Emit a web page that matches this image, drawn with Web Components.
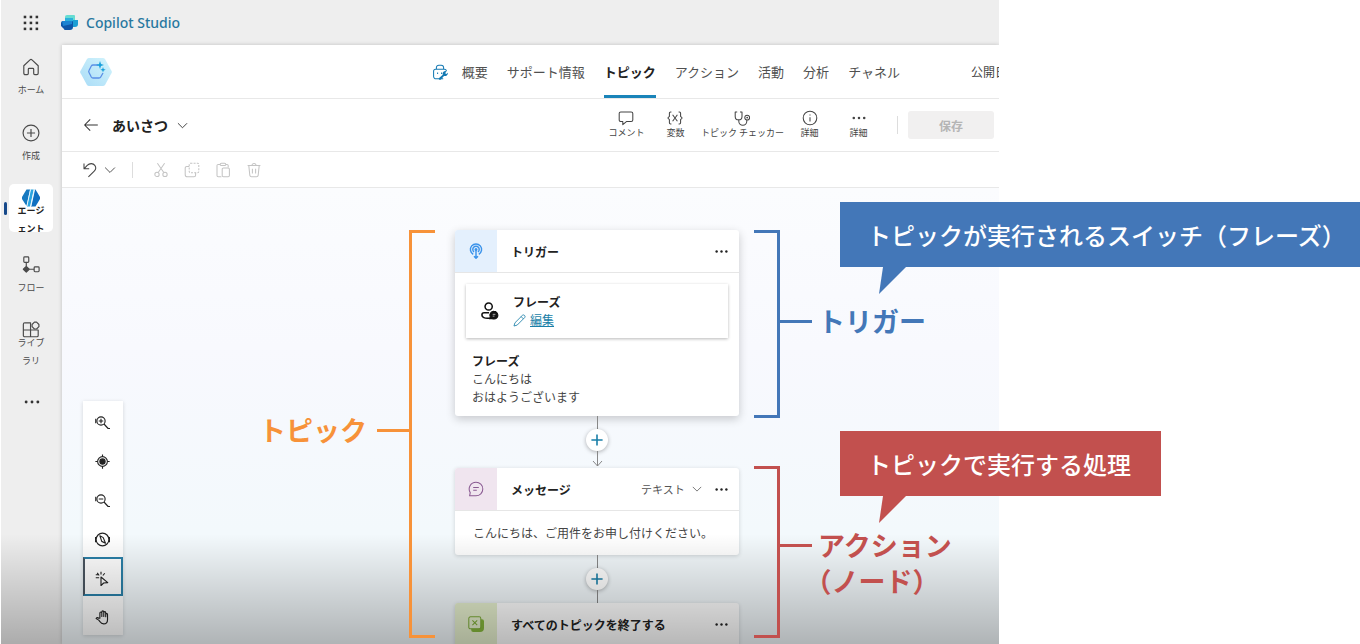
<!DOCTYPE html>
<html lang="ja">
<head>
<meta charset="utf-8">
<meta name="viewport" content="width=device-width, initial-scale=1">
<title>Copilot Studio</title>
<style>
    body {
        margin: 0;
        background: #fff;
        color: #444;
        font-family: "Noto Sans CJK JP", "Noto Sans", sans-serif;
        font-size: 12px;
    }
</style>
</head>
<body>
<topic-guide></topic-guide>

<script>
// stroke icons on a 20px grid
const ICONS = {
    waffle: '<g fill="currentColor" stroke="none"><rect x="2" y="2" width="3" height="3"/><rect x="9" y="2" width="3" height="3"/><rect x="16" y="2" width="3" height="3"/><rect x="2" y="9" width="3" height="3"/><rect x="9" y="9" width="3" height="3"/><rect x="16" y="9" width="3" height="3"/><rect x="2" y="16" width="3" height="3"/><rect x="9" y="16" width="3" height="3"/><rect x="16" y="16" width="3" height="3"/></g>',
    home: '<path d="M2 8.600 8.900 2a1.600 1.600 0 0 1 2.200 0L18 8.600V17a1.500 1.500 0 0 1-1.500 1.500h-2.300a1.200 1.200 0 0 1-1.200-1.200V12.500a1 1 0 0 0-1-1H8a1 1 0 0 0-1 1v4.800a1.200 1.200 0 0 1-1.200 1.200H3.500A1.500 1.500 0 0 1 2 17z"/>',
    create: '<circle cx="10" cy="10" r="8.800"/><path d="M10 5.500v9M5.500 10h9"/>',
    agent: '<g stroke="none"><path fill="#1679c0" d="M5 .500h4L5 19 0 11V9z"/><path fill="#2aa5e0" d="M9.500.500H13L9 19.500H5.500z"/><path fill="#0f6fc0" d="M14 .500h1L20 9v2l-5 8.500H10z"/><path fill="#eaf6fd" d="M9 .500h1L6 19H5zM13.300.500h1.200L10.500 19h-1.200z"/></g>',
    flow: '<rect x="2" y="1" width="5.500" height="6" rx="1"/><rect x="13.500" y="12" width="5.500" height="5.500" rx="1"/><path d="M4.750 7v4M8 14.750h5.500"/><path fill="currentColor" d="m4.750 11.500 3.250 3.250L4.750 18 1.500 14.750z"/>',
    library: '<path d="M1.500 3.500a1.500 1.500 0 0 1 1.500-1.500H9.500V17.500H3A1.500 1.500 0 0 1 1.500 16zM1.500 10H18v6a1.500 1.500 0 0 1-1.500 1.500H9.500"/><path d="M13.800 1.300h2.400l2.600 2.600v2.400l-2.600 2.600h-2.400l-2.600-2.600V3.900z"/>',
    dots: '<g fill="currentColor" stroke="none"><circle cx="3.500" cy="10" r="1.600"/><circle cx="10" cy="10" r="1.600"/><circle cx="16.500" cy="10" r="1.600"/></g>',
    bag: '<path d="M14 18.500H5a3 3 0 0 1-3-3V9a2.500 2.500 0 0 1 2.500-2.500h11A2.500 2.500 0 0 1 18 9M5.500 6.500V4.500a3 3 0 0 1 3-3h3a3 3 0 0 1 3 3v2M7 10.500v2M12 10.500v2"/><path stroke="none" fill="#1479b3" d="M20 11a4 4 0 0 1-5 4l-4 4.500a1.500 1.500 0 0 1-2.200-2L13.500 13.500A3.500 3.500 0 0 1 18 9l-1.500 2.500 1.500 1z"/>',
    back: '<path d="M18.500 10H2M9 3l-7 7 7 7"/>',
    chevron: '<path d="m3 6.500 7 7 7-7"/>',
    comment: '<path d="M3.500 2.500h13A2 2 0 0 1 18.500 4.500v8a2 2 0 0 1-2 2H10.500L6 18.300V14.500H3.500a2 2 0 0 1-2-2v-8a2 2 0 0 1 2-2z"/>',
    variable: '<path d="M5.500 2.500H4.500a1.500 1.500 0 0 0-1.500 1.500v4L1 10l2 2v4a1.500 1.500 0 0 0 1.500 1.500h1M14.500 2.500h1A1.500 1.500 0 0 1 17 4v4l2 2-2 2v4a1.500 1.500 0 0 1-1.500 1.500h-1M7 6l6 8M13 6l-6 8"/>',
    checker: '<path d="M4 2.500H1.500V8a4 4 0 0 0 8.500 0V2.500H7.500M6 12v2a5 5 0 0 0 10 0v-1.500"/><circle cx="16.500" cy="9.500" r="3"/><circle cx="16.500" cy="9.500" r=".500"/>',
    info: '<circle cx="10" cy="10" r="8.500"/><path d="M10 9v5.500M10 5.500v1.500"/>',
    undo: '<path d="M2.500 2v6.500H9M2.500 8.500 6.500 4.300C9.500 1.200 14 1.400 16 4.200c1.800 2.500 1.200 5.300-.700 7.200L8 18.500"/>',
    cut: '<circle cx="5" cy="15.500" r="2.700"/><circle cx="15" cy="15.500" r="2.700"/><path d="M6.500 13.200 14.500 1.500M13.500 13.200 5.500 1.500"/>',
    copy: '<path stroke-dasharray="2.500 1.500" d="M8 1.500h9a1.500 1.500 0 0 1 1.500 1.500v9a1.500 1.500 0 0 1-1.500 1.500H8A1.500 1.500 0 0 1 6.500 12V3A1.500 1.500 0 0 1 8 1.500z"/><path d="M6.500 5.500h-3A2 2 0 0 0 1.500 7.500v8a3 3 0 0 0 3 3h8a2 2 0 0 0 2-2v-3"/>',
    paste: '<path d="M6.500 3H4a1.500 1.500 0 0 0-1.500 1.500V17A1.500 1.500 0 0 0 4 18.500h4M13.500 3H15a1.500 1.500 0 0 1 1.500 1.500V7"/><rect x="6.500" y="1.500" width="7" height="3" rx="1.500"/><rect x="9" y="7.500" width="9" height="11" rx="1.500"/>',
    trash: '<path d="M2 4.500h16M7.500 4.500a2.500 2.500 0 0 1 5 0M3.500 4.500l1.300 12.300a2 2 0 0 0 2 1.700h6.400a2 2 0 0 0 2-1.700L16.500 4.500M8 8.500v6M12 8.500v6"/>',
    zoomIn: '<circle cx="8" cy="8" r="5.500"/><path d="m12 12 5.500 6H20M8 5v6M5 8h6M1 5v6"/>',
    zoomOut: '<circle cx="8" cy="8" r="5.500"/><path d="m12 12 5.500 6H20M5 8h6M1 5v6"/>',
    target: '<circle cx="10" cy="10" r="6.500"/><circle cx="10" cy="10" r="3.500" fill="currentColor"/><path d="M10 .500v3M10 16.500v3M.500 10h3M16.500 10h3"/>',
    compass: '<circle cx="10" cy="10" r="8.500"/><path d="m6.500 5 4.500 2.500 3 7.500-5-2.500zM.700 6.500v7M19.300 6.500v7"/>',
    pointer: '<path d="M8 8v11.500l3.500-3.500 5.500-.500zM5.500 6 3 2.500M8 4.500V1M10.500 6 13 3M5.500 9H1M1 5h3"/>',
    hand: '<path d="M6.500 11V4a1.300 1.300 0 0 1 2.600 0v4.500V2.500a1.300 1.300 0 0 1 2.600 0v6V3.500a1.300 1.300 0 0 1 2.600 0V9V6a1.200 1.200 0 0 1 2.400 0v6.500c0 3.500-2 6-5.200 6-2.500 0-3.700-1-4.700-2.800L5 13.500l-3.500-2c.500-1.700 2.200-1.700 3.500-.500z"/>',
    trigger: '<g stroke-width="1.800"><path d="M6.500 14.200a7 7 0 1 1 7 0M7.500 11.200a4 4 0 1 1 5 0"/><circle cx="10" cy="8" r="1"/><path d="M10 9v10M7.500 16.500 10 19l2.500-2.500"/></g>',
    message: '<path d="M10 1.500a8.500 8.500 0 1 1 0 17H2l.800-4A8.500 8.500 0 0 1 10 1.500zM6.500 8h7M6.500 11.500H11"/>',
    end: '<path stroke="none" fill="#86b83c" d="M16 4h1.500A2.500 2.500 0 0 1 20 6.500V15a5 5 0 0 1-5 5H6.500A2.500 2.500 0 0 1 4 17.500V16h9a3 3 0 0 0 3-3z"/><rect x="1" y="1" width="15" height="15" rx="2"/><path d="m5.500 5.500 6 6M11.500 5.500l-6 6"/>',
    person: '<g stroke-width="1.700"><circle cx="8.500" cy="5" r="4"/><path d="M9 18c-5 .500-8-1-8-3.500C1 13 2 12 3.500 12H9"/></g><path fill="currentColor" d="M14.500 10.500a4.200 4.200 0 1 1 0 8.400 5 5 0 0 1-2-.400H9.300l1-2a4.200 4.200 0 0 1 4.200-6z"/><path stroke="#fff" stroke-width=".700" d="M13 13.700h3M13 15.700h2"/>',
    pencil: '<path d="M14.500 2a2.500 2.500 0 0 1 3.500 3.500L6.500 17l-5 1.500L3 13.500zM12.500 4l3.500 3.500"/>',
    plus: '<path d="M10 3v14M3 10h14"/>'
};

class UiIcon extends HTMLElement {
    connectedCallback() {
        this.attachShadow({ mode: 'open' });
        this.shadowRoot.innerHTML = `
            <style>
                :host {
                    display: block;
                    flex: none;
                    width: var(--size, 16px);
                    height: var(--size, 16px);
                }
                svg {
                    display: block;
                    width: 100%;
                    height: 100%;
                    fill: none;
                    stroke: currentColor;
                    stroke-width: var(--stroke, 1.3);
                    stroke-linejoin: round;
                }
            </style>
            <svg viewBox="0 0 20 20" aria-hidden="true">${ICONS[this.getAttribute('name')]}</svg>
        `;
    }
}

class TopBar extends HTMLElement {
    constructor() {
        super();
        this.attachShadow({ mode: 'open' });
        this.shadowRoot.innerHTML = `
            <style>
                :host {
                    display: flex;
                    align-items: center;
                    height: 45px;
                    padding: 0 21px;
                    gap: 22px;
                    background: #eee;
                }
                button {
                    padding: 0;
                    border: none;
                    background: none;
                    color: #333;
                    --size: 17px;
                }
                a {
                    display: flex;
                    align-items: center;
                    gap: 8px;
                    color: #2878a0;
                    font: 500 14px/20px "Noto Sans", sans-serif;
                    text-decoration: none;
                }
            </style>
            <button aria-label="アプリ起動ツール"><ui-icon name="waffle"></ui-icon></button>
            <a href="#">
                <svg width="17" height="17" viewBox="0 0 17 17" aria-hidden="true">
                    <path fill="#1c9ed4" d="M5 6h12v4a3 3 0 0 1-3 3H9z"/>
                    <path fill="#66dcd2" d="M6 1h7a1 1 0 0 1 1 1v4H4V3a2 2 0 0 1 2-2z"/>
                    <path fill="#2bb0dc" d="M4 4h8v5H4z"/>
                    <path fill="#0e56a8" d="M2 7h9a1 1 0 0 1 1 1v5a3 3 0 0 1-3 3H4a1 1 0 0 1-1-1l-3-3V9a2 2 0 0 1 2-2z"/>
                    <path fill="#1b83d2" d="M1 7h10v3L2 12z"/>
                </svg>
                Copilot Studio
            </a>
        `;
    }
}

class NavItem extends HTMLElement {
    connectedCallback() {
        this.attachShadow({ mode: 'open' });
        this.shadowRoot.innerHTML = `
            <style>
                :host {
                    display: block;
                    height: 48px;
                    position: relative;
                }
                a {
                    display: flex;
                    flex-direction: column;
                    align-items: center;
                    box-sizing: border-box;
                    height: 48px;
                    margin: 0 9px 0 8px;
                    padding-top: 6px;
                    gap: 5px;
                    border-radius: 5px;
                    color: #4a4a4a;
                    font-size: 9px;
                    line-height: 18px;
                    text-align: center;
                    text-decoration: none;
                    --size: 18px;
                }
                :host([wrapped]) a {
                    padding-top: 5px;
                    gap: 0;
                }
                :host([wrapped]) span {
                    margin-top: -5px;
                }
                :host([current]) a {
                    background: #fff;
                    overflow: hidden;
                    color: #222;
                    font-weight: bold;
                }
                /* marker of the open section */
                :host([current])::before {
                    content: "";
                    position: absolute;
                    left: 3px;
                    top: 18px;
                    width: 3px;
                    height: 13px;
                    border-radius: 2px;
                    background: #17498a;
                }
            </style>
            <a href="#">
                <ui-icon name="${this.getAttribute('icon')}"></ui-icon>
                <span><slot></slot></span>
            </a>
        `;
    }
}

class SideNav extends HTMLElement {
    constructor() {
        super();
        this.attachShadow({ mode: 'open' });
        this.shadowRoot.innerHTML = `
            <style>
                :host {
                    display: block;
                    flex: none;
                    width: 61px;
                    background: #eee;
                }
                nav {
                    display: flex;
                    flex-direction: column;
                    gap: 18px;
                    padding-top: 7px;
                }
                button {
                    display: flex;
                    align-items: center;
                    justify-content: center;
                    height: 40px;
                    padding: 0;
                    border: none;
                    background: none;
                    color: #333;
                    --size: 18px;
                }
            </style>
            <nav>
                <nav-item icon="home">ホーム</nav-item>
                <nav-item icon="create">作成</nav-item>
                <nav-item icon="agent" wrapped current>エージ<br>ェント</nav-item>
                <nav-item icon="flow">フロー</nav-item>
                <nav-item icon="library" wrapped>ライブ<br>ラリ</nav-item>
                <button aria-label="その他"><ui-icon name="dots"></ui-icon></button>
            </nav>
        `;
    }
}

class AgentTabs extends HTMLElement {
    constructor() {
        super();
        this.attachShadow({ mode: 'open' });
        this.shadowRoot.innerHTML = `
            <style>
                :host {
                    display: flex;
                    align-items: center;
                    height: 53px;
                    padding-left: 18px;
                    border-bottom: 1px solid #e8e8e8;
                    white-space: nowrap;
                }
                nav {
                    display: flex;
                    align-items: center;
                    align-self: stretch;
                    gap: 19px;
                    margin-left: auto;
                    margin-right: 71px;
                    font-size: 13px;
                }
                ui-icon {
                    color: #1479b3;
                    margin-right: -5px;
                }
                a {
                    display: flex;
                    align-items: center;
                    height: 100%;
                    box-sizing: border-box;
                    border-bottom: 3px solid transparent;
                    border-top: 3px solid transparent;
                    color: #505050;
                    text-decoration: none;
                }
                a[aria-current] {
                    border-bottom-color: #1a84b9;
                    color: #222;
                    font-weight: bold;
                }
                .published {
                    width: 28px;
                    overflow: hidden;
                }
            </style>
            <svg width="32" height="28" viewBox="0 0 32 28" aria-hidden="true">
                <defs>
                    <linearGradient id="hex" x1="0" y1="1" x2="1" y2="0">
                        <stop offset="0" stop-color="#a9dcf7"/>
                        <stop offset="1" stop-color="#d3f4fc"/>
                    </linearGradient>
                </defs>
                <path fill="url(#hex)" d="M9 0h14a3 3 0 0 1 2 1l6 11a3 3 0 0 1 0 4l-6 11a3 3 0 0 1-2 1H9a3 3 0 0 1-2-1L1 16a3 3 0 0 1 0-4L7 1a3 3 0 0 1 2-1z"/>
                <path fill="none" stroke="#5a8fe6" stroke-width="1.300" d="M18 7h-5a2 2 0 0 0-1.700 1L9 12.500a2 2 0 0 0 0 2L11.300 19a2 2 0 0 0 1.700 1h6a2 2 0 0 0 1.700-1L23 15"/>
                <path fill="#18a0dc" d="m20 3 1 3 3 1-3 1-1 3-1-3-3-1 3-1zM23 9l.700 2 2 .700-2 .700-.700 2-.700-2-2-.700 2-.700z"/>
            </svg>
            <nav>
                <ui-icon name="bag"></ui-icon>
                <a href="#">概要</a>
                <a href="#">サポート情報</a>
                <a href="#" aria-current="page">トピック</a>
                <a href="#">アクション</a>
                <a href="#">活動</a>
                <a href="#">分析</a>
                <a href="#">チャネル</a>
            </nav>
            <span class="published">公開日</span>
        `;
    }
}

class CommandButton extends HTMLElement {
    connectedCallback() {
        this.attachShadow({ mode: 'open' });
        this.shadowRoot.innerHTML = `
            <style>
                :host {
                    display: block;
                    --size: 16px;
                }
                button {
                    display: flex;
                    flex-direction: column;
                    align-items: center;
                    min-width: 49px;
                    padding: 0 1px;
                    border: none;
                    background: none;
                    color: #444;
                    font: inherit;
                    font-size: 9px;
                    line-height: 14px;
                    white-space: nowrap;
                }
            </style>
            <button>
                <ui-icon name="${this.getAttribute('icon')}"></ui-icon>
                <slot></slot>
            </button>
        `;
    }
}

class CommandBar extends HTMLElement {
    constructor() {
        super();
        this.attachShadow({ mode: 'open' });
        this.shadowRoot.innerHTML = `
            <style>
                :host {
                    display: flex;
                    align-items: center;
                    height: 52px;
                    padding: 0 5px 0 21px;
                    border-bottom: 1px solid #e8e8e8;
                }
                button {
                    padding: 0;
                    border: none;
                    background: none;
                    color: #333;
                    font: inherit;
                }
                .title {
                    display: flex;
                    align-items: center;
                    gap: 8px;
                    margin-left: 13px;
                    color: #222;
                    font-size: 14px;
                    line-height: 18px;
                    font-weight: bold;
                    --size: 13px;
                }
                .commands {
                    display: flex;
                    margin-left: auto;
                }
                .divider {
                    width: 1px;
                    height: 18px;
                    margin: 0 10px 0 14px;
                    background: #ddd;
                }
                .save {
                    width: 86px;
                    height: 28px;
                    border-radius: 3px;
                    background: #f1f0f0;
                    color: #b5b5b5;
                    font-weight: bold;
                }
            </style>
            <button aria-label="戻る"><ui-icon name="back"></ui-icon></button>
            <button class="title">あいさつ<ui-icon name="chevron"></ui-icon></button>
            <div class="commands">
                <command-button icon="comment">コメント</command-button>
                <command-button icon="variable">変数</command-button>
                <command-button icon="checker">トピック チェッカー</command-button>
                <command-button icon="info">詳細</command-button>
                <command-button icon="dots">詳細</command-button>
            </div>
            <span class="divider"></span>
            <button class="save" disabled>保存</button>
        `;
    }
}

class EditBar extends HTMLElement {
    constructor() {
        super();
        this.attachShadow({ mode: 'open' });
        this.shadowRoot.innerHTML = `
            <style>
                :host {
                    display: flex;
                    align-items: center;
                    height: 35px;
                    padding-left: 20px;
                    border-bottom: 1px solid #e8e8e8;
                }
                button {
                    padding: 0;
                    border: none;
                    background: none;
                    color: #444;
                }
                .more {
                    margin-left: 5px;
                    --size: 14px;
                }
                .divider {
                    width: 1px;
                    height: 16px;
                    margin: 0 20px 0 15px;
                    background: #ddd;
                }
                .group {
                    display: flex;
                    gap: 15px;
                }
                .group button {
                    color: #c4c4c4;
                }
            </style>
            <button aria-label="元に戻す"><ui-icon name="undo"></ui-icon></button>
            <button class="more" aria-label="履歴"><ui-icon name="chevron"></ui-icon></button>
            <span class="divider"></span>
            <div class="group">
                <button aria-label="切り取り" disabled><ui-icon name="cut"></ui-icon></button>
                <button aria-label="コピー" disabled><ui-icon name="copy"></ui-icon></button>
                <button aria-label="貼り付け" disabled><ui-icon name="paste"></ui-icon></button>
                <button aria-label="削除" disabled><ui-icon name="trash"></ui-icon></button>
            </div>
        `;
    }
}

class CanvasTools extends HTMLElement {
    constructor() {
        super();
        this.attachShadow({ mode: 'open' });
        this.shadowRoot.innerHTML = `
            <style>
                :host {
                    display: flex;
                    flex-direction: column;
                    width: 40px;
                    background: #fff;
                    box-shadow: 0 1px 4px rgba(0, 0, 0, 0.15);
                }
                button {
                    display: flex;
                    align-items: center;
                    justify-content: center;
                    box-sizing: border-box;
                    height: 39px;
                    padding: 3px 2px 0 0;
                    border: 2px solid transparent;
                    background: none;
                    color: #222;
                    --size: 15px;
                    --stroke: 1.5;
                }
                button[aria-pressed] {
                    border-color: #2a80a8;
                    border-left-color: #4a5560;
                }
            </style>
            <button aria-label="拡大"><ui-icon name="zoomIn"></ui-icon></button>
            <button aria-label="中央に表示"><ui-icon name="target"></ui-icon></button>
            <button aria-label="縮小"><ui-icon name="zoomOut"></ui-icon></button>
            <button aria-label="ミニマップ"><ui-icon name="compass"></ui-icon></button>
            <button aria-label="選択" aria-pressed="true"><ui-icon name="pointer"></ui-icon></button>
            <button aria-label="移動"><ui-icon name="hand"></ui-icon></button>
        `;
    }
}

class FlowNode extends HTMLElement {
    connectedCallback() {
        this.attachShadow({ mode: 'open' });
        this.shadowRoot.innerHTML = `
            <style>
                :host {
                    display: block;
                    align-self: stretch;
                    border-radius: 3px;
                    background: #fff;
                    box-shadow: 0 1px 4px rgba(0, 0, 0, 0.16);
                    overflow: hidden;
                }
                :host([kind="trigger"]) {
                    --tint: #e4f0fd;
                    --ink: #3b93ea;
                    box-shadow: 0 3px 10px rgba(0, 0, 0, 0.2);
                }
                :host([kind="message"]) { --tint: #f0e5ef; --ink: #8a5a92; }
                :host([kind="end"]) { --tint: #e7f1cf; --ink: #7fae38; }
                header {
                    display: flex;
                    align-items: center;
                    height: 42px;
                    padding-right: 10px;
                    border-bottom: 1px solid #e6e6e6;
                }
                .badge {
                    display: flex;
                    align-items: center;
                    justify-content: center;
                    align-self: stretch;
                    width: 42px;
                    background: var(--tint);
                    color: var(--ink);
                }
                h2 {
                    flex: 1;
                    margin: 0 0 0 14px;
                    color: #222;
                    font-size: 12px;
                    font-weight: bold;
                }
                button {
                    padding: 0;
                    border: none;
                    background: none;
                    color: #222;
                    --size: 15px;
                }
            </style>
            <header>
                <span class="badge"><ui-icon name="${this.getAttribute('kind')}"></ui-icon></span>
                <h2>${this.getAttribute('heading')}</h2>
                <slot name="option"></slot>
                <button aria-label="その他のオプション"><ui-icon name="dots"></ui-icon></button>
            </header>
            <slot></slot>
        `;
    }
}

class FormatSelect extends HTMLElement {
    constructor() {
        super();
        this.attachShadow({ mode: 'open' });
        this.shadowRoot.innerHTML = `
            <style>
                :host {
                    display: flex;
                    align-items: center;
                    gap: 6px;
                    margin-right: 11px;
                    --size: 12px;
                    color: #555;
                }
                select {
                    appearance: none;
                    padding: 0;
                    border: none;
                    background: none;
                    color: #555;
                    font: inherit;
                    font-size: 11px;
                }
            </style>
            <select aria-label="形式"><option>テキスト</option></select>
            <ui-icon name="chevron"></ui-icon>
        `;
    }
}

class PhraseBody extends HTMLElement {
    constructor() {
        super();
        this.attachShadow({ mode: 'open' });
        this.shadowRoot.innerHTML = `
            <style>
                :host {
                    display: block;
                    padding: 11px 11px 10px;
                    line-height: 18px;
                }
                .card {
                    display: flex;
                    align-items: center;
                    gap: 14px;
                    height: 54px;
                    padding-left: 15px;
                    box-shadow: 0 1px 3px rgba(0, 0, 0, 0.28);
                    color: #111;
                    --size: 18px;
                }
                strong {
                    display: block;
                    color: #222;
                }
                a {
                    display: flex;
                    align-items: center;
                    gap: 4px;
                    color: #1a7fa8;
                    text-decoration: none;
                    --size: 13px;
                }
                a span {
                    text-decoration: underline;
                }
                .phrases {
                    padding: 14px 6px 0;
                }
                p {
                    margin: 0;
                }
            </style>
            <div class="card">
                <ui-icon name="person"></ui-icon>
                <div>
                    <strong>フレーズ</strong>
                    <a href="#"><ui-icon name="pencil"></ui-icon><span>編集</span></a>
                </div>
            </div>
            <div class="phrases">
                <strong>フレーズ</strong>
                <p>こんにちは</p>
                <p>おはようございます</p>
            </div>
        `;
    }
}

class FlowLink extends HTMLElement {
    connectedCallback() {
        this.attachShadow({ mode: 'open' });
        this.shadowRoot.innerHTML = `
            <style>
                :host {
                    display: flex;
                    flex-direction: column;
                    align-items: center;
                    color: #888;
                }
                .line {
                    width: 1px;
                    height: 13px;
                    background: currentColor;
                }
                svg {
                    display: block;
                    fill: none;
                    stroke: currentColor;
                }
                button {
                    display: flex;
                    align-items: center;
                    justify-content: center;
                    width: 22px;
                    height: 22px;
                    padding: 0;
                    border: none;
                    border-radius: 50%;
                    background: #fff;
                    box-shadow: 0 1px 4px rgba(0, 0, 0, 0.3);
                    color: #1a7fa8;
                    --stroke: 2;
                }
            </style>
            <span class="line"></span>
            <button aria-label="ノードの追加"><ui-icon name="plus"></ui-icon></button>
            ${this.hasAttribute('arrow')
                ? '<svg width="11" height="17" viewBox="0 0 11 17"><path d="M5.500 0v15M1 10l4.500 5L10 10"/></svg>'
                : '<span class="line"></span>'}
        `;
    }
}

class TopicCanvas extends HTMLElement {
    constructor() {
        super();
        this.attachShadow({ mode: 'open' });
        this.shadowRoot.innerHTML = `
            <style>
                :host {
                    display: block;
                    position: relative;
                    flex: 1;
                    min-height: 0;
                    overflow: hidden;
                    background: linear-gradient(#fbfcfe, #f8f9fe 35%, #f3f9fc 75%);
                }
                canvas-tools {
                    position: absolute;
                    left: 21px;
                    top: 213px;
                }
                .flow {
                    display: flex;
                    flex-direction: column;
                    align-items: center;
                    width: 284px;
                    margin: 42px 0 0 393px;
                }
                .reply {
                    margin: 0;
                    padding: 10px 18px;
                    line-height: 24px;
                    white-space: nowrap;
                }
            </style>
            <canvas-tools></canvas-tools>
            <div class="flow">
                <flow-node kind="trigger" heading="トリガー"><phrase-body></phrase-body></flow-node>
                <flow-link arrow></flow-link>
                <flow-node kind="message" heading="メッセージ">
                    <format-select slot="option"></format-select>
                    <p class="reply">こんにちは、ご用件をお申し付けください。</p>
                </flow-node>
                <flow-link></flow-link>
                <flow-node kind="end" heading="すべてのトピックを終了する"></flow-node>
            </div>
        `;
    }
}

class StudioApp extends HTMLElement {
    constructor() {
        super();
        this.attachShadow({ mode: 'open' });
        this.shadowRoot.innerHTML = `
            <style>
                :host {
                    display: flex;
                    flex-direction: column;
                    position: relative;
                    min-width: 0;
                    overflow: hidden;
                }
                .work {
                    display: flex;
                    flex: 1;
                    min-height: 0;
                }
                main {
                    display: flex;
                    flex-direction: column;
                    flex: 1;
                    min-width: 0;
                    overflow: hidden;
                    background: #fff;
                    box-shadow: 0 0 4px rgba(0, 0, 0, 0.2);
                }
                /* fade to grey along the bottom edge */
                .shade {
                    position: absolute;
                    left: 0;
                    right: 0;
                    bottom: 0;
                    height: 110px;
                    background: linear-gradient(rgba(0, 0, 0, 0), rgba(0, 0, 0, 0.28));
                    pointer-events: none;
                }
            </style>
            <top-bar></top-bar>
            <div class="work">
                <side-nav></side-nav>
                <main>
                    <agent-tabs></agent-tabs>
                    <command-bar></command-bar>
                    <edit-bar></edit-bar>
                    <topic-canvas></topic-canvas>
                </main>
            </div>
            <div class="shade"></div>
        `;
    }
}

class NoteBracket extends HTMLElement {
    constructor() {
        super();
        this.attachShadow({ mode: 'open' });
        this.shadowRoot.innerHTML = `
            <style>
                :host {
                    display: flex;
                    align-items: flex-start;
                    font-size: 27px;
                    font-weight: bold;
                    line-height: 36px;
                    text-spacing-trim: trim-start;
                    white-space: nowrap;
                }
                .shape {
                    align-self: stretch;
                    box-sizing: border-box;
                    width: 26px;
                    border: 3px solid;
                    border-left: none;
                }
                .stem {
                    width: 32px;
                    height: 3px;
                    margin: var(--stem) 6px 0 0;
                    background: currentColor;
                }
                .label {
                    margin-top: calc(var(--stem) - 17px);
                }
                :host([side="left"]) {
                    flex-direction: row-reverse;
                }
                :host([side="left"]) .shape {
                    border-left: 3px solid;
                    border-right: none;
                }
                :host([side="left"]) .stem {
                    margin: var(--stem) 0 0 10px;
                }
            </style>
            <span class="shape"></span>
            <span class="stem"></span>
            <span class="label"><slot></slot></span>
        `;
    }
}

class NoteCallout extends HTMLElement {
    constructor() {
        super();
        this.attachShadow({ mode: 'open' });
        this.shadowRoot.innerHTML = `
            <style>
                :host {
                    display: block;
                    color: var(--fill);
                }
                p {
                    margin: 0;
                    padding: 0 30px 0 27px;
                    background: var(--fill);
                    color: #fff;
                    font-size: 24px;
                    font-weight: 500;
                    line-height: 65px;
                    white-space: nowrap;
                }
                svg {
                    display: block;
                    margin-left: 39px;
                    fill: currentColor;
                }
            </style>
            <p><slot></slot></p>
            <svg width="28" height="27" viewBox="0 0 28 27" aria-hidden="true"><path d="M4 0h23L0 27z"/></svg>
        `;
    }
}

class TopicGuide extends HTMLElement {
    constructor() {
        super();
        this.attachShadow({ mode: 'open' });
        this.shadowRoot.innerHTML = `
            <style>
                :host {
                    display: grid;
                    grid-template-columns: 998fr 361fr;
                    grid-template-rows: 100vh;
                    position: relative;
                    padding-left: 1px;
                    overflow: hidden;
                    --orange: #f79239;
                    --blue: #4377b8;
                    --red: #c2504e;
                }
                /* notes drawn over the app */
                note-bracket,
                note-callout {
                    position: absolute;
                }
                .topic { left: 259px; top: 230px; height: 408px; color: var(--orange); --stem: 199px; }
                .trigger { left: 754px; top: 230px; height: 188px; color: var(--blue); --stem: 90px; }
                .action { left: 754px; top: 466px; height: 172px; color: var(--red); --stem: 78px; }
                .switch { left: 840px; right: 0; top: 202px; --fill: var(--blue); }
                .process { left: 840px; top: 431px; --fill: var(--red); }
            </style>
            <studio-app></studio-app>
            <note-bracket class="topic" side="left">トピック</note-bracket>
            <note-bracket class="trigger">トリガー</note-bracket>
            <note-bracket class="action">アクション<br>（ノード）</note-bracket>
            <note-callout class="switch">トピックが実行されるスイッチ（フレーズ）</note-callout>
            <note-callout class="process">トピックで実行する処理</note-callout>
        `;
    }
}

customElements.define('ui-icon', UiIcon);
customElements.define('top-bar', TopBar);
customElements.define('nav-item', NavItem);
customElements.define('side-nav', SideNav);
customElements.define('agent-tabs', AgentTabs);
customElements.define('command-button', CommandButton);
customElements.define('command-bar', CommandBar);
customElements.define('edit-bar', EditBar);
customElements.define('canvas-tools', CanvasTools);
customElements.define('flow-node', FlowNode);
customElements.define('format-select', FormatSelect);
customElements.define('phrase-body', PhraseBody);
customElements.define('flow-link', FlowLink);
customElements.define('topic-canvas', TopicCanvas);
customElements.define('studio-app', StudioApp);
customElements.define('note-bracket', NoteBracket);
customElements.define('note-callout', NoteCallout);
customElements.define('topic-guide', TopicGuide);
</script>
</body>
</html>
